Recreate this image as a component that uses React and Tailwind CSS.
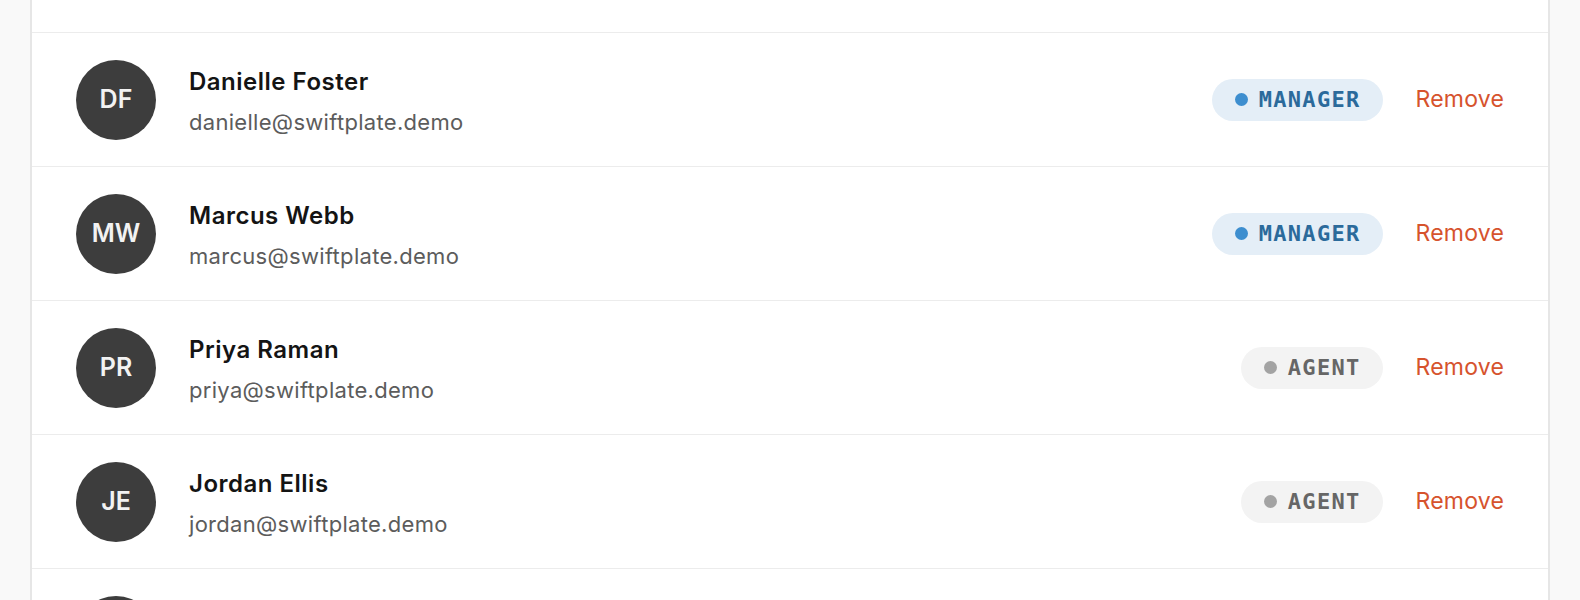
import React from "react";

const members = [
  { initials: "DF", name: "Danielle Foster", email: "danielle@swiftplate.demo", role: "MANAGER" },
  { initials: "MW", name: "Marcus Webb", email: "marcus@swiftplate.demo", role: "MANAGER" },
  { initials: "PR", name: "Priya Raman", email: "priya@swiftplate.demo", role: "AGENT" },
  { initials: "JE", name: "Jordan Ellis", email: "jordan@swiftplate.demo", role: "AGENT" },
  { initials: "SK", name: "Sofia Kim", email: "sofia@swiftplate.demo", role: "AGENT" },
];

function RoleBadge({ role }) {
  const manager = role === "MANAGER";
  return (
    <span
      className={
        manager
          ? "flex h-[42px] items-center gap-[11px] rounded-full bg-[#e4eef7] pl-[23px] pr-[22px]"
          : "flex h-[42px] items-center gap-[11px] rounded-full bg-[#f3f3f3] pl-[23px] pr-[22px]"
      }
    >
      <span
        className={
          manager
            ? "h-[13px] w-[13px] rounded-full bg-[#3d8ecf]"
            : "h-[13px] w-[13px] rounded-full bg-[#a3a3a3]"
        }
      />
      <span
        className={
          manager
            ? "text-[22px] leading-none font-bold tracking-[1.3px] text-[#2b6a9b]"
            : "text-[22px] leading-none font-bold tracking-[1.3px] text-[#666666]"
        }
        style={{ fontFamily: '"DejaVu Sans Mono", "Liberation Mono", monospace' }}
      >
        {role}
      </span>
    </span>
  );
}

function Row({ m }) {
  return (
    <div className="flex h-[134px] items-center border-t border-[#ececec] px-[44px]">
      <div className="flex h-20 w-20 shrink-0 items-center justify-center rounded-full bg-[#3d3d3d] text-[25px] font-semibold text-[#f2f2f2]">
        {m.initials}
      </div>
      <div className="ml-[33px] flex min-w-0 flex-1 flex-col pt-[2px]">
        <div className="text-[24px] leading-[32px] font-semibold tracking-[0.5px] text-[#141414]">
          {m.name}
        </div>
        <div className="mt-[10px] text-[22px] leading-[28px] tracking-[0.3px] text-[#5c5c5c]">
          {m.email}
        </div>
      </div>
      <RoleBadge role={m.role} />
      <button className="ml-[33px] text-[23px] leading-none tracking-[0.2px] text-[#d6532d]">
        Remove
      </button>
    </div>
  );
}

export default function App() {
  return (
    <div
      className="h-[600px] overflow-hidden bg-[#f9f9f9] px-[30px]"
      style={{ fontFamily: 'Inter, "Noto Sans", sans-serif' }}
    >
      <div className="h-full border-x-2 border-[#e6e6e6] bg-white">
        <div className="h-[32px]" />
        {members.map((m) => (
          <Row key={m.initials} m={m} />
        ))}
      </div>
    </div>
  );
}
